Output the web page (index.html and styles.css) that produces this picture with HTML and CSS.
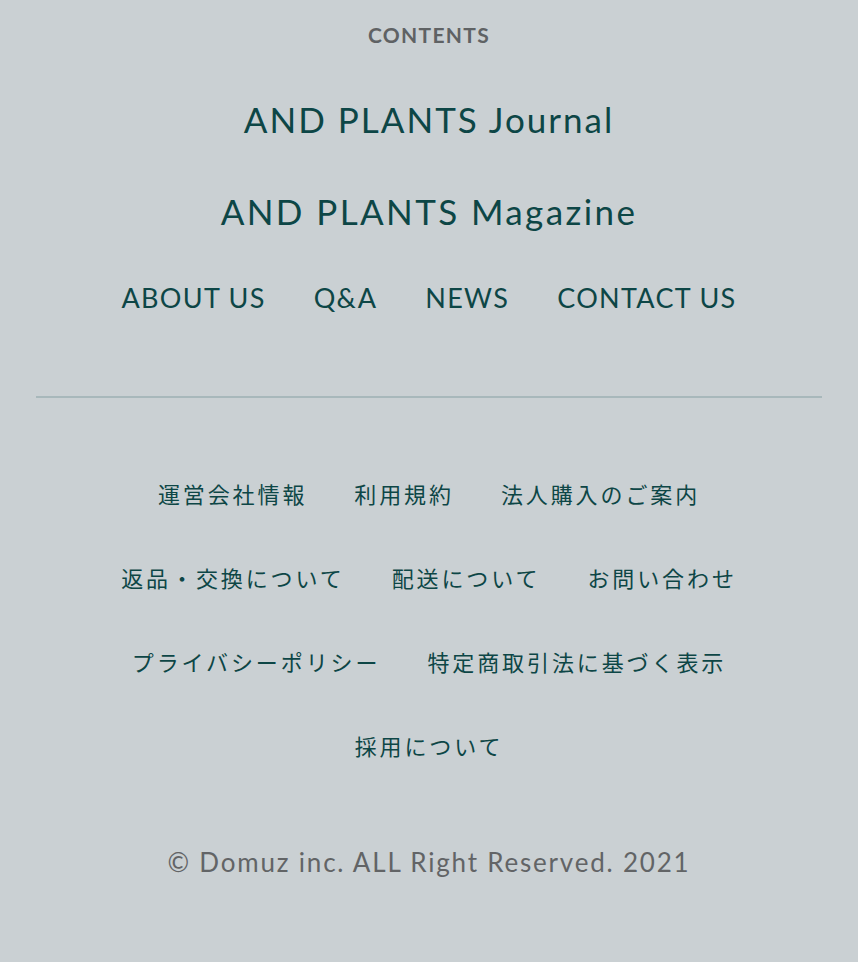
FILE: index.html
```html
<!DOCTYPE html>
<html lang="ja">
<head>
<meta charset="utf-8">
<title>Footer</title>
<link rel="stylesheet" href="styles.css">
</head>
<body>
<footer class="footer">
  <section class="contents">
    <h2 class="contents-title">CONTENTS</h2>
    <a class="big-link" href="#">AND PLANTS Journal</a>
    <a class="big-link big-link-wide" href="#">AND PLANTS Magazine</a>
    <nav class="main-nav">
      <a href="#">ABOUT US</a>
      <a href="#">Q&amp;A</a>
      <a href="#">NEWS</a>
      <a href="#">CONTACT US</a>
    </nav>
  </section>
  <hr class="divider">
  <section class="info">
    <div class="info-row">
      <a href="#">運営会社情報</a>
      <a href="#">利用規約</a>
      <a href="#">法人購入のご案内</a>
    </div>
    <div class="info-row">
      <a href="#">返品・交換について</a>
      <a href="#">配送について</a>
      <a href="#">お問い合わせ</a>
    </div>
    <div class="info-row">
      <a href="#">プライバシーポリシー</a>
      <a href="#">特定商取引法に基づく表示</a>
    </div>
    <div class="info-row">
      <a href="#">採用について</a>
    </div>
  </section>
  <p class="copyright">© Domuz inc. ALL Right Reserved. 2021</p>
</footer>
</body>
</html>
```
FILE: styles.css
```css
html, body {
  margin: 0;
  padding: 0;
  background: #cad0d3;
}
body {
  font-family: Lato, "Noto Sans CJK JP", sans-serif;
  color: #0d4646;
}
a {
  color: inherit;
  text-decoration: none;
}
.footer {
  padding: 0 36px;
}
.contents {
  display: flex;
  flex-direction: column;
  align-items: center;
}
.contents-title {
  margin: 0 0 3px;
  font-size: 21px;
  font-weight: 700;
  letter-spacing: 1.3px;
  line-height: 70px;
  color: #5f6264;
}
.big-link {
  display: block;
  font-size: 35px;
  line-height: 92px;
  letter-spacing: 2px;
}
.big-link-wide {
  letter-spacing: 2.4px;
}
.main-nav {
  display: flex;
  justify-content: center;
  gap: 48px;
  font-size: 27px;
  line-height: 82px;
  letter-spacing: 1.3px;
}
.divider {
  margin: 57px 0 0;
  border: 0;
  border-top: 2px solid #a8b8bb;
  height: 0;
}
.info {
  padding-top: 53px;
  display: flex;
  flex-direction: column;
  font-family: "Noto Sans CJK JP", sans-serif;
  font-size: 22px;
  letter-spacing: 2.9px;
}
.info-row {
  display: flex;
  justify-content: center;
  gap: 47px;
  line-height: 84px;
}
.copyright {
  margin: 45px 0 0;
  padding-bottom: 60px;
  text-align: center;
  font-size: 26px;
  line-height: 60px;
  letter-spacing: 1.8px;
  color: #626466;
}
```
